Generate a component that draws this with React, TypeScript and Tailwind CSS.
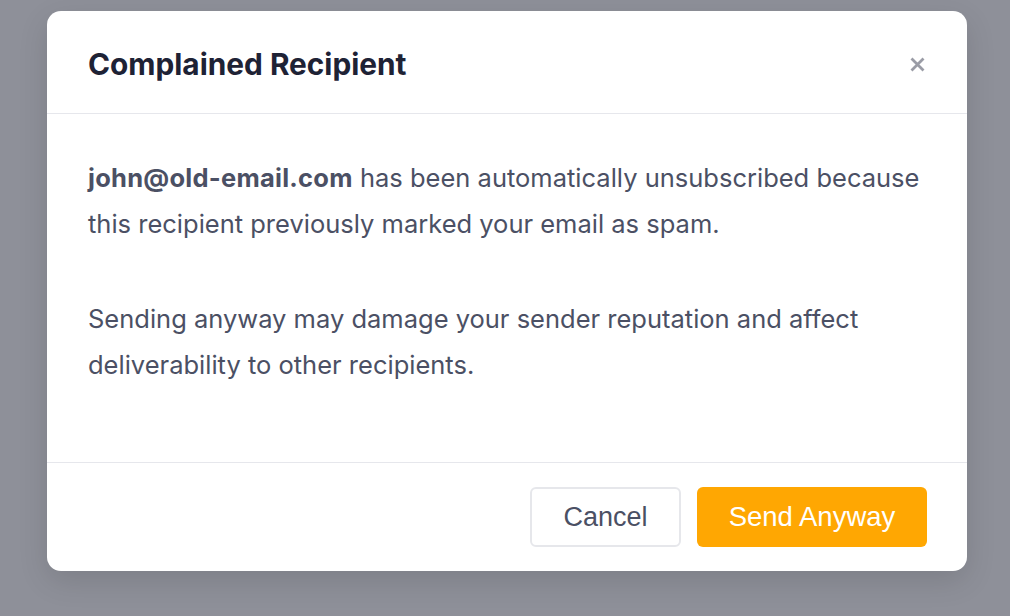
import React from "react";

export default function App() {
  return (
    <div className="w-full h-[616px] bg-[#8e9099] overflow-hidden pt-[11px] pl-[47px]" style={{ fontFamily: "Inter, 'Noto Sans', sans-serif" }}>
      <div className="w-[920px] h-[560px] bg-white rounded-[14px] shadow-[0_10px_30px_rgba(0,0,0,0.12)] flex flex-col">
        <div className="h-[103px] flex items-center justify-between pl-[41px] pr-[42px] pt-[3px] border-b border-[#e6e7ec]">
          <h2 className="text-[29.8px] font-bold text-[#1e2235] leading-[36px]">Complained Recipient</h2>
          <button className="w-[15px] h-[15px] mt-[1px] flex items-center justify-center text-[#9a9ca6]">
            <svg width="15" height="15" viewBox="0 0 15 15" fill="none" stroke="currentColor" strokeWidth="2.8" strokeLinecap="butt">
              <path d="M1.5 1.5 L13.5 13.5 M13.5 1.5 L1.5 13.5" />
            </svg>
          </button>
        </div>
        <div className="flex-1 pl-[41px] pr-[30px] pt-[41px] text-[25.5px] leading-[46px] text-[#4b5064]">
          <p className="whitespace-nowrap">
            <strong className="font-bold tracking-[0.25px]">john@old-email.com</strong> has been automatically unsubscribed because
            <br />
            this recipient previously marked your email as spam.
          </p>
          <p className="mt-[49px] whitespace-nowrap">
            Sending anyway may damage your sender reputation and affect
            <br />
            deliverability to other recipients.
          </p>
        </div>
        <div className="h-[109px] border-t border-[#e6e7ec] flex items-start justify-end gap-[16px] pt-[24px] pr-[40px]" style={{ fontFamily: "'Liberation Sans', Arial, sans-serif" }}>
          <button className="w-[151px] h-[60px] rounded-[6px] border-2 border-[#e6e7eb] bg-white text-[27px] text-[#4b5064]">Cancel</button>
          <button className="w-[230px] h-[60px] rounded-[6px] bg-[#ffa702] text-[27.5px] text-white">Send Anyway</button>
        </div>
      </div>
    </div>
  );
}
